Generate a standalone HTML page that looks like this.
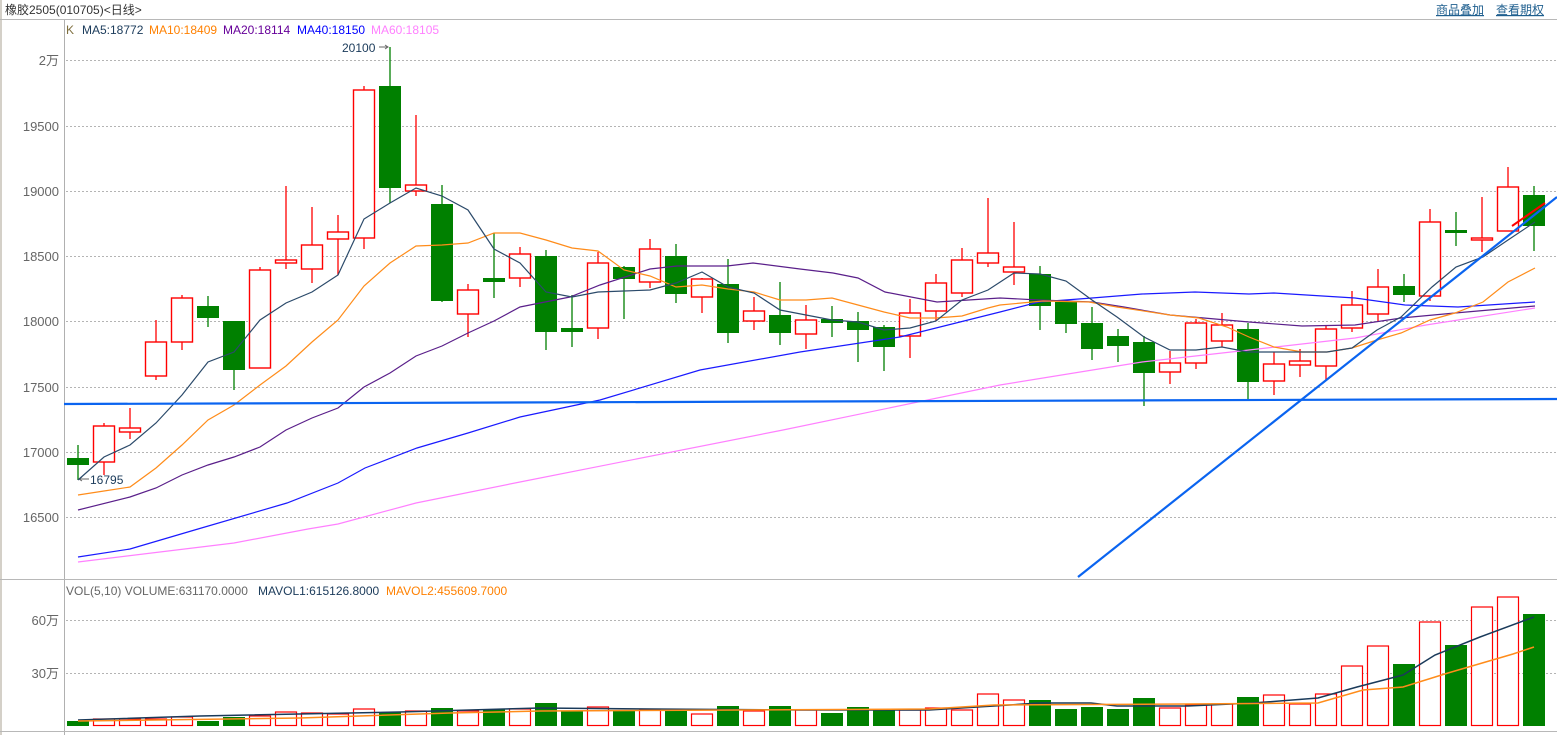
<!DOCTYPE html>
<html><head><meta charset="utf-8"><style>
html,body{margin:0;padding:0;background:#fff;}
body{width:1557px;height:735px;overflow:hidden;position:relative;font-family:"Liberation Sans","Noto Sans CJK SC",sans-serif;}
svg{position:absolute;left:0;top:0;}
</style></head><body>
<svg id="s" width="1557" height="735" viewBox="0 0 1557 735" xmlns="http://www.w3.org/2000/svg" font-family="Liberation Sans, Noto Sans CJK SC, sans-serif">
<rect x="0" y="0" width="2" height="735" fill="#d4d0c8"/>
<line x1="0" y1="19.5" x2="1557" y2="19.5" stroke="#b8b8b8"/>
<line x1="64.5" y1="20" x2="64.5" y2="735" stroke="#b0b0b0"/>
<line x1="0" y1="579.5" x2="1557" y2="579.5" stroke="#b8b8b8"/>
<line x1="0" y1="731.5" x2="1557" y2="731.5" stroke="#b8b8b8"/>
<text x="5" y="14" font-size="12" fill="#333">橡胶2505(010705)&lt;日线&gt;</text>
<text x="1436" y="14" font-size="12" fill="#1f5f8f" text-decoration="underline">商品叠加</text>
<text x="1496" y="14" font-size="12" fill="#1f5f8f" text-decoration="underline">查看期权</text>
<g stroke="#b4b4b4" stroke-dasharray="2,2">
<line x1="66" y1="60.5" x2="1557" y2="60.5"/><line x1="66" y1="126.5" x2="1557" y2="126.5"/>
<line x1="66" y1="191.5" x2="1557" y2="191.5"/><line x1="66" y1="256.5" x2="1557" y2="256.5"/>
<line x1="66" y1="321.5" x2="1557" y2="321.5"/><line x1="66" y1="387.5" x2="1557" y2="387.5"/>
<line x1="66" y1="452.5" x2="1557" y2="452.5"/><line x1="66" y1="517.5" x2="1557" y2="517.5"/>
<line x1="66" y1="620.5" x2="1557" y2="620.5"/><line x1="66" y1="673.5" x2="1557" y2="673.5"/>
</g>
<g font-size="13" fill="#666" text-anchor="end">
<text x="59" y="65">2万</text><text x="59" y="131">19500</text><text x="59" y="196">19000</text>
<text x="59" y="261">18500</text><text x="59" y="326">18000</text><text x="59" y="392">17500</text>
<text x="59" y="457">17000</text><text x="59" y="522">16500</text>
<text x="59" y="625">60万</text><text x="59" y="678">30万</text>
</g>
<g font-size="12">
<text x="66" y="34" fill="#7f6f3f">K</text>
<text x="82" y="34" fill="#1a3a5a">MA5:18772</text>
<text x="149" y="34" fill="#ff8000">MA10:18409</text>
<text x="223" y="34" fill="#660099">MA20:18114</text>
<text x="297" y="34" fill="#0000ff">MA40:18150</text>
<text x="371" y="34" fill="#ff80ff">MA60:18105</text>
<text x="66" y="595" fill="#666">VOL(5,10) VOLUME:631170.0000</text>
<text x="258" y="595" fill="#1a3a5a">MAVOL1:615126.8000</text>
<text x="386" y="595" fill="#ff8000">MAVOL2:455609.7000</text>
<text x="342" y="52" fill="#1a3a5a">20100</text>
<text x="90" y="484" fill="#1a3a5a">16795</text>
</g>
<g stroke="#666" fill="none"><path d="M379 47H388M385 45L388 47L385 49"/><path d="M79 479H89M82 477L79 479L82 481"/></g>
<g id="c"></g>
</svg>
<script>
var C=[[0,458,465,445,480],[1,426,462,423,475],[1,428,432,408,439],[1,342,376,320,380],[1,298,342,295,350],[0,306,318,296,327],[0,321,370,321,390],[1,270,368,267,368],[1,260,263,186,269],[1,245,269,207,283],[1,232,239,215,275],[1,90,238,86,249],[0,86,188,47,203],[1,185,191,115,196],[0,204,301,185,302],[1,290,314,284,337],[0,278,282,233,298],[1,254,278,247,287],[0,256,332,250,350],[0,328,332,295,347],[1,263,328,252,339],[0,267,279,266,319],[1,249,282,239,288],[0,256,294,244,303],[1,279,297,278,313],[0,284,333,259,343],[1,311,321,297,330],[0,315,333,282,345],[1,320,334,305,349],[0,319,323,306,337],[0,321,330,312,362],[0,327,347,325,371],[1,313,336,299,358],[1,283,311,274,321],[1,260,293,248,297],[1,253,263,198,267],[1,267,272,222,285],[0,274,306,266,330],[0,302,324,300,333],[0,323,349,307,360],[0,336,346,329,362],[0,342,373,336,406],[1,363,372,351,384],[1,323,363,319,369],[1,325,341,313,347],[0,329,382,323,400],[1,364,381,352,395],[1,361,365,349,377],[1,329,366,326,380],[1,305,328,291,332],[1,287,314,269,322],[0,286,295,274,302],[1,222,296,209,301],[0,230,232,212,246],[1,238,240,197,252],[1,187,231,167,231],[0,195,226,186,251]];
var V=[721,719,719,719,717,721,717,716,712,713,714,709,712,711,708,711,709,709,703,711,707,710,710,710,714,706,711,706,710,713,707,710,710,708,710,694,700,700,709,707,709,698,708,705,704,697,695,704,694,666,646,664,622,645,607,597,614];
var h='',G='#008000',R='#ff0000';
function X(i){return 78+i*26;}
C.forEach(function(c,i){var x=X(i);
 if(c[0]){h+='<line x1="'+x+'" y1="'+c[3]+'" x2="'+x+'" y2="'+c[1]+'" stroke="'+R+'" stroke-width="1.3"/>';
  h+='<line x1="'+x+'" y1="'+c[2]+'" x2="'+x+'" y2="'+c[4]+'" stroke="'+R+'" stroke-width="1.3"/>';
  h+='<rect x="'+(x-10.5)+'" y="'+c[1]+'" width="21" height="'+Math.max(c[2]-c[1],2)+'" fill="#fff" stroke="'+R+'" stroke-width="1.4"/>';}
 else{h+='<line x1="'+x+'" y1="'+c[3]+'" x2="'+x+'" y2="'+c[4]+'" stroke="'+G+'" stroke-width="1.3"/>';
  h+='<rect x="'+(x-11)+'" y="'+c[1]+'" width="22" height="'+Math.max(c[2]-c[1],3)+'" fill="'+G+'"/>';}
 var t=V[i];
 if(c[0])h+='<rect x="'+(x-10.5)+'" y="'+t+'" width="21" height="'+(725.5-t)+'" fill="#fff" stroke="'+R+'" stroke-width="1.2"/>';
 else h+='<rect x="'+(x-11)+'" y="'+t+'" width="22" height="'+(726-t)+'" fill="'+G+'"/>';
});
function P(pts,col,w){h+='<polyline fill="none" stroke="'+col+'" stroke-width="'+(w||1.2)+'" points="'+pts+'"/>';}
P('78,562 234,543 308,529 338,524 416,503 520,482 783,430 1000,385 1142,362 1249,350 1355,338 1426,325 1535,308','#ff80ff');
P('78,557 130,549 198,529 287,503 338,483 365,468 417,448 468,433 520,417 600,400 700,370 800,352 900,337 1000,312 1039,302 1092,298 1142,294 1195,292 1249,294 1274,293 1355,298 1405,305 1458,307 1535,302','#1a1aff');
P('78,510 130,497 156,488 182,475 208,465 234,457 260,447 286,430 312,418 338,408 364,387 390,373 416,356 442,346 468,333 494,321 520,307 570,297 600,285 650,269 677,266 727,266 753,263 800,269 833,273 858,278 885,292 937,302 1000,298 1039,300 1092,302 1124,307 1170,315 1249,322 1302,326 1355,325 1401,318 1455,313 1535,306','#5a1f8a');
P('78,495 104,491 130,487 156,468 182,445 208,420 234,405 260,385 286,366 312,342 338,320 364,286 390,263 416,246 442,245 468,243 494,233 520,233 546,240 572,248 598,251 624,270 650,276 676,287 702,285 728,289 754,292 780,300 806,300 832,298 858,305 884,312 910,318 936,318 962,316 988,308 1000,305 1043,301 1089,302 1117,307 1170,315 1199,318 1227,327 1249,337 1274,347 1302,352 1327,352 1352,348 1377,340 1401,333 1430,320 1455,313 1483,302 1508,282 1535,268','#ff8c1a');
P('78,480 104,457 130,445 156,423 182,395 208,362 234,352 260,320 286,303 312,292 338,275 364,219 390,203 416,188 442,196 468,210 494,249 520,263 546,292 572,297 598,292 624,291 650,290 676,283 702,272 728,287 754,293 780,310 806,315 832,320 858,322 884,330 910,328 936,321 962,300 988,290 1014,273 1040,274 1066,281 1092,300 1117,317 1144,337 1170,350 1196,350 1222,347 1248,352 1302,352 1327,352 1352,348 1377,330 1401,317 1432,287 1456,267 1483,257 1508,240 1535,222','#2b4a6a');
h+='<line x1="64" y1="404" x2="1557" y2="399" stroke="#0a64f0" stroke-width="2.2"/>';
h+='<line x1="1078" y1="577" x2="1557" y2="197" stroke="#0a64f0" stroke-width="2.2"/>';
h+='<line x1="1512" y1="226" x2="1545" y2="203" stroke="#ff0000" stroke-width="2"/>';
P('78,720 200,716 400,712 540,708 650,709 800,710 929,710 994,706 1039,703 1091,703 1117,706 1188,706 1253,703 1318,698 1357,687 1403,675 1435,655 1480,637 1534,617','#1a3a5a',1.5);
P('78,721 300,718 450,713 540,711 929,709 994,705 1188,704 1318,703 1363,690 1403,687 1448,673 1513,654 1534,647','#ff8c1a',1.5);
document.getElementById('c').innerHTML=h;
</script>
</body></html>
